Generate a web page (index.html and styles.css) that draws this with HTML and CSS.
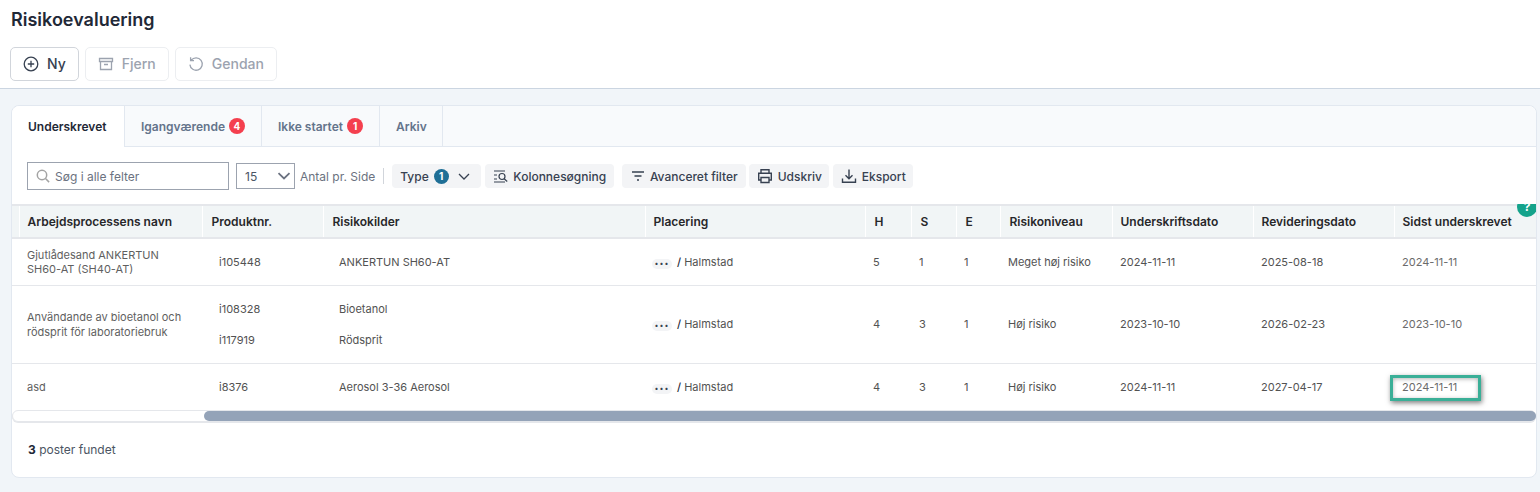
FILE: index.html
```html
<!DOCTYPE html>
<html lang="en">
<head>
  <meta charset="UTF-8">
  <title>Risikoevaluering</title>
  <link rel="stylesheet" href="styles.css">
</head>
<body>
  <header class="page-header">
    <h1>Risikoevaluering</h1>
    <div class="actions">
      <button class="action-button">
        <svg width="16" height="16" viewBox="0 0 16 16" fill="none" stroke="currentColor" stroke-width="1.3"><circle cx="8" cy="8" r="6.8"/><path d="M8 4.8v6.4M4.8 8h6.4"/></svg>
        Ny
      </button>
      <button class="action-button disabled">
        <svg width="16" height="16" viewBox="0 0 16 16" fill="none" stroke="currentColor" stroke-width="1.3"><path d="M1.5 2.5h13v3h-13zM2.5 5.5v8h11v-8M6 8.5h4"/></svg>
        Fjern
      </button>
      <button class="action-button disabled">
        <svg width="16" height="16" viewBox="0 0 16 16" fill="none" stroke="currentColor" stroke-width="1.3"><path d="M3.2 4.2A6.2 6.2 0 1 1 1.9 8.6M2.6 1.2v3.4H6"/></svg>
        Gendan
      </button>
    </div>
  </header>

  <main class="content">
    <section class="card">
      <nav class="tabs">
        <a class="tab tab-active tab-1">Underskrevet</a>
        <a class="tab tab-2">Igangværende <span class="count">4</span></a>
        <a class="tab tab-3">Ikke startet <span class="count">1</span></a>
        <a class="tab tab-4">Arkiv</a>
      </nav>

      <div class="toolbar">
        <label class="search">
          <svg width="14" height="14" viewBox="0 0 14 14" fill="none" stroke="#a3a3a3" stroke-width="1.5"><circle cx="6" cy="6" r="4.7"/><path d="M9.5 9.5l3.6 3.6"/></svg>
          <input type="text" placeholder="Søg i alle felter">
        </label>
        <div class="page-size">
          <span>15</span>
          <svg width="14" height="8" viewBox="0 0 14 8" fill="none" stroke="#6b7280" stroke-width="1.8"><path d="M1.5 1.2L7 6.5l5.5-5.3"/></svg>
        </div>
        <span class="page-size-label">Antal pr. Side</span>
        <span class="divider"></span>
        <button class="tool tool-type">Type <span class="type-count">1</span>
          <svg class="type-arrow" width="12" height="7" viewBox="0 0 12 7" fill="none" stroke="#374151" stroke-width="1.3"><path d="M1 1l5 5 5-5"/></svg>
        </button>
        <button class="tool tool-column">
          <svg width="16" height="14" viewBox="0 0 16 14" fill="none" stroke="#374151" stroke-width="1.2"><path d="M1 2h11M1 6h3M1 10h3M1 13h11"/><circle cx="9" cy="7.5" r="3"/><path d="M11.2 9.7l3 2.8"/></svg>
          Kolonnesøgning
        </button>
        <button class="tool tool-filter">
          <svg width="14" height="10" viewBox="0 0 14 10" fill="none" stroke="#374151" stroke-width="1.3"><path d="M1 1h12M3.5 5h7M6 9h2"/></svg>
          Avanceret filter
        </button>
        <button class="tool tool-print">
          <svg width="16" height="16" viewBox="0 0 16 16" fill="none" stroke="#374151" stroke-width="1.4"><path d="M4 5V1.7h8V5M4 12H1.7V5.2h12.6V12H12M4 9.5h8v5H4z"/></svg>
          Udskriv
        </button>
        <button class="tool tool-export">
          <svg width="16" height="16" viewBox="0 0 16 16" fill="none" stroke="#374151" stroke-width="1.4"><path d="M8 1.5v9M4.5 7.2L8 10.7l3.5-3.5M1.5 10.5v3.8h13v-3.8"/></svg>
          Eksport
        </button>
      </div>

      <div class="table-wrap">
        <table class="risk-table">
          <colgroup>
            <col class="col-stub"><col class="col-name"><col class="col-product"><col class="col-source"><col class="col-place">
            <col class="col-h"><col class="col-s"><col class="col-e"><col class="col-level">
            <col class="col-date"><col class="col-date"><col class="col-last">
          </colgroup>
          <thead>
            <tr>
              <th></th>
              <th class="th-tight">Arbejdsprocessens navn</th>
              <th>Produktnr.</th>
              <th>Risikokilder</th>
              <th class="th-tight">Placering</th>
              <th>H</th>
              <th>S</th>
              <th>E</th>
              <th>Risikoniveau</th>
              <th class="th-tight">Underskriftsdato</th>
              <th class="th-tight">Revideringsdato</th>
              <th class="th-tight">Sidst underskrevet</th>
            </tr>
          </thead>
          <tbody>
            <tr class="row-1">
              <td></td>
              <td class="name">Gjutlådesand ANKERTUN SH60-AT (SH40-AT)</td>
              <td class="product">i105448</td>
              <td class="source">ANKERTUN SH60-AT</td>
              <td class="place"><span class="more">•••</span><b class="slash">/</b> Halmstad</td>
              <td>5</td><td>1</td><td>1</td>
              <td>Meget høj risiko</td>
              <td>2024-11-11</td>
              <td>2025-08-18</td>
              <td class="last">2024-11-11</td>
            </tr>
            <tr class="row-2">
              <td></td>
              <td class="name name-loose">Användande av bioetanol och rödsprit för laboratoriebruk</td>
              <td class="product"><div class="stack"><span>i108328</span><span>i117919</span></div></td>
              <td class="source"><div class="stack"><span>Bioetanol</span><span>Rödsprit</span></div></td>
              <td class="place"><span class="more">•••</span><b class="slash">/</b> Halmstad</td>
              <td>4</td><td>3</td><td>1</td>
              <td>Høj risiko</td>
              <td>2023-10-10</td>
              <td>2026-02-23</td>
              <td class="last">2023-10-10</td>
            </tr>
            <tr class="row-3">
              <td></td>
              <td class="name">asd</td>
              <td class="product">i8376</td>
              <td class="source">Aerosol 3-36 Aerosol</td>
              <td class="place"><span class="more">•••</span><b class="slash">/</b> Halmstad</td>
              <td>4</td><td>3</td><td>1</td>
              <td>Høj risiko</td>
              <td>2024-11-11</td>
              <td>2027-04-17</td>
              <td class="last">2024-11-11</td>
            </tr>
          </tbody>
        </table>
        <span class="help">?</span>
        <div class="highlight"></div>
      </div>

      <div class="scrollbar"><div class="scrollbar-thumb"></div></div>

      <footer class="card-footer"><b>3</b> poster fundet</footer>
    </section>
  </main>
</body>
</html>
```

FILE: styles.css
```css
* {
  box-sizing: border-box;
}

body {
  margin: 0;
  height: 492px;
  overflow: hidden;
  font-family: Inter, 'Noto Sans', sans-serif;
  background: #f1f5f9;
  color: #374151;
}

.page-header {
  height: 89px;
  padding: 10px 10px 0;
  background: #fff;
  border-bottom: 1px solid #cbd5e1;
}

h1 {
  margin: 0 0 0 1px;
  font-size: 18px;
  line-height: 20px;
  font-weight: 600;
  color: #1f2937;
}

.actions {
  display: flex;
  gap: 6px;
  margin-top: 17px;
}

.action-button {
  display: flex;
  align-items: center;
  gap: 8px;
  height: 34px;
  padding: 0 12px 1px;
  border: 1px solid #d1d5db;
  border-radius: 5px;
  background: #fff;
  font-family: inherit;
  font-size: 14px;
  font-weight: 500;
  color: #374151;
}

.action-button.disabled {
  border-color: #eceef1;
  color: #9ca3af;
}

.content {
  padding: 16px 3px 0 11px;
}

.card {
  position: relative;
  height: 373px;
  background: #fff;
  border: 1px solid #e2e8f0;
  border-radius: 8px;
}

.tabs {
  display: flex;
  height: 41px;
  background: #f8fafc;
  border-bottom: 1px solid #e2e8f0;
  border-radius: 8px 8px 0 0;
}

.tab {
  display: flex;
  align-items: center;
  gap: 4px;
  padding-left: 16px;
  font-size: 12px;
  font-weight: 600;
  color: #64748b;
  border-right: 1px solid #e2e8f0;
}

.tab-1 { width: 113px; }
.tab-2 { width: 137px; }
.tab-3 { width: 118px; }
.tab-4 { width: 63px; }

.tab-active {
  height: 41px;
  background: #fff;
  color: #1f2937;
  border-radius: 8px 0 0 0;
}

.count {
  display: flex;
  align-items: center;
  justify-content: center;
  width: 16px;
  height: 16px;
  border-radius: 50%;
  background: #f43f4e;
  color: #fff;
  font-size: 10px;
  font-weight: 700;
}

.toolbar {
  display: flex;
  align-items: center;
  height: 57px;
  padding: 1px 0 0 15px;
}

.search {
  display: flex;
  align-items: center;
  gap: 5px;
  width: 202px;
  height: 28px;
  padding: 0 8px;
  border: 1px solid #9ca3af;
}

.search input {
  width: 160px;
  border: 0;
  outline: 0;
  padding: 0;
  font-family: inherit;
  font-size: 12px;
}

.search input::placeholder {
  color: #6b7280;
}

.page-size {
  display: flex;
  align-items: center;
  justify-content: space-between;
  width: 59px;
  height: 26px;
  margin-left: 7px;
  padding: 0 3px 0 8px;
  border: 1px solid #9ca3af;
  font-size: 12px;
  color: #4b5563;
}

.page-size-label {
  margin-left: 5px;
  font-size: 12px;
  color: #6b7280;
}

.divider {
  width: 1px;
  height: 16px;
  margin: 0 8px;
  background: #d1d5db;
}

.tool {
  display: flex;
  align-items: center;
  justify-content: center;
  gap: 5px;
  height: 24px;
  padding: 0;
  border: 0;
  border-radius: 4px;
  background: #f3f4f6;
  font-family: inherit;
  font-size: 12px;
  font-weight: 500;
  color: #374151;
}

.tool-type { width: 89px; justify-content: flex-start; padding-left: 8px; }
.tool-column { width: 129px; margin-left: 4px; gap: 4px; }
.tool-filter { width: 124px; margin-left: 8px; }
.tool-print { width: 80px; margin-left: 3px; }
.tool-export { width: 80px; margin-left: 4px; }

.type-count {
  display: flex;
  align-items: center;
  justify-content: center;
  width: 15px;
  height: 15px;
  border-radius: 50%;
  background: #1f6f96;
  color: #fff;
  font-size: 10px;
  font-weight: 700;
}

.type-arrow {
  margin-left: 4px;
}

.table-wrap {
  position: relative;
  height: 206px;
  overflow: hidden;
}

.risk-table {
  width: 1524px;
  table-layout: fixed;
  border-collapse: collapse;
  font-size: 11px;
}

.col-stub { width: 7px; }
.col-name { width: 183px; }
.col-product { width: 121px; }
.col-source { width: 322px; }
.col-place { width: 220px; }
.col-h { width: 46px; }
.col-s { width: 45px; }
.col-e { width: 44px; }
.col-level { width: 112px; }
.col-date { width: 141px; }
.col-last { width: 142px; }

.risk-table th {
  height: 33px;
  padding: 0 9px;
  text-align: left;
  font-size: 12px;
  font-weight: 600;
  color: #27272a;
  background: #f1f5f6;
  border-top: 2px solid #e5e7eb;
  border-bottom: 2px solid #e5e7eb;
  border-left: 1px solid #fff;
}

.risk-table th:first-child {
  border-left: 0;
}

.risk-table th.th-tight {
  padding-left: 8px;
}

.risk-table td {
  padding: 0 8px;
  color: #525252;
  border-bottom: 1px solid #e5e7eb;
  line-height: 14px;
}

.row-1 td { height: 47px; }
.row-2 td { height: 78px; }
.row-3 td { height: 46px; padding-top: 2px; border-bottom: 0; }

.risk-table td:first-child {
  padding: 0;
}

.risk-table td.name {
  padding-right: 20px;
  color: #5f5f5f;
}

.risk-table td.name-loose {
  padding-top: 2px;
  line-height: 15px;
}

.risk-table td.product {
  padding-left: 17px;
}

.risk-table td.source {
  padding-left: 16px;
}

.risk-table td.place {
  padding-left: 7px;
}

.risk-table td.last {
  color: #6b6b6b;
}

.stack {
  display: flex;
  flex-direction: column;
  gap: 17px;
}

.more {
  display: inline-block;
  width: 20px;
  height: 10px;
  margin-right: 5px;
  border-radius: 5px;
  background: #f3f4f6;
  color: #374151;
  font-size: 7px;
  letter-spacing: 1px;
  line-height: 10px;
  text-align: center;
  vertical-align: 0;
}

.slash {
  font-weight: 500;
  color: #1f2937;
}

.help {
  position: absolute;
  top: -7px;
  right: -1px;
  width: 20px;
  height: 20px;
  border-radius: 50%;
  background: #14a38b;
  color: #fff;
  font-size: 12px;
  font-weight: 700;
  line-height: 20px;
  text-align: center;
}

.highlight {
  position: absolute;
  left: 1378px;
  top: 171px;
  width: 91px;
  height: 26px;
  border: 3px solid #3aaf97;
  box-shadow: 1px 2px 5px rgba(0, 0, 0, 0.5), inset 0 1px 4px rgba(0, 0, 0, 0.3);
}

.scrollbar {
  height: 12px;
  margin-right: 0;
  border: 1px solid #e5e7eb;
  border-radius: 6px;
  background: #fff;
  box-shadow: 0 1px 0 #e5e7eb;
}

.scrollbar-thumb {
  width: 1332px;
  height: 10px;
  margin-left: 191px;
  border-radius: 5px;
  background: #94a3b8;
}

.card-footer {
  padding: 20px 16px 0;
  font-size: 12px;
  color: #4b5563;
}

.card-footer b {
  font-weight: 700;
  color: #1f2937;
}
```
